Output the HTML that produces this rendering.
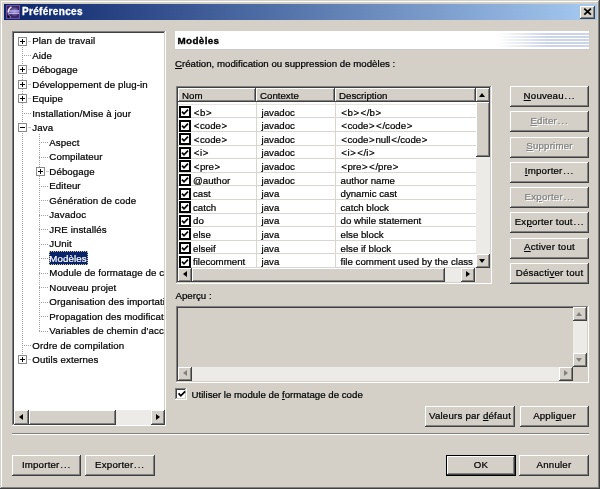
<!DOCTYPE html><html><head><meta charset="utf-8"><style>
html,body{margin:0;padding:0;width:600px;height:489px;overflow:hidden;background:#d4d0c8}
body{position:relative;font-family:"Liberation Sans",sans-serif;font-size:9.7px}
.t{position:absolute;white-space:nowrap;line-height:1.15;color:#000;-webkit-text-stroke:0.22px currentColor}
.c{text-align:center}
u{text-decoration:underline;text-underline-offset:1px}
.b{margin:0 0.65px}
</style></head><body><div id="w" style="position:absolute;left:0;top:0;width:600px;height:489px;will-change:transform">
<div style="position:absolute;left:0px;top:0px;width:600px;height:489px;background:#404040"></div>
<div style="position:absolute;left:0px;top:0px;width:599px;height:488px;background:#d4d0c8"></div>
<div style="position:absolute;left:1px;top:1px;width:598px;height:487px;background:#808080"></div>
<div style="position:absolute;left:1px;top:1px;width:597px;height:486px;background:#ffffff"></div>
<div style="position:absolute;left:2px;top:2px;width:596px;height:485px;background:#d4d0c8"></div>
<div style="position:absolute;left:4px;top:4px;width:593px;height:16px;background:linear-gradient(to right,#0a246a,#a6caf0)"></div>
<svg style="position:absolute;left:6px;top:5px" width="14" height="14" viewBox="0 0 14 14"><defs><radialGradient id="sg" cx="0.55" cy="0.45" r="0.6"><stop offset="0" stop-color="#9890c0"/><stop offset="0.6" stop-color="#5a4a8a"/><stop offset="1" stop-color="#2a1a50"/></radialGradient></defs><rect x="0.5" y="0.5" width="13" height="13" fill="#3a2468" stroke="#7050a0" stroke-width="1"/><circle cx="8" cy="7" r="5" fill="url(#sg)"/><rect x="2" y="5.3" width="11" height="1.4" fill="#b8b0f0"/><rect x="2" y="7.6" width="11" height="1.4" fill="#b8b0f0"/><path d="M5.5 1.8 Q2 4 2.2 7.5" stroke="#f0e8ff" stroke-width="1.5" fill="none"/><path d="M2.2 8 Q2.6 11 5 12.5" stroke="#9080c0" stroke-width="1.2" fill="none"/><rect x="1.5" y="10.5" width="2" height="2" fill="#000"/></svg>
<div class="t" style="left:22px;top:6.3px;font-size:10px;font-weight:bold;color:#fff;letter-spacing:0.32px;-webkit-text-stroke:0.3px #fff">Préférences</div>
<div style="position:absolute;left:580px;top:6px;width:15px;height:13px;background:#404040"></div>
<div style="position:absolute;left:580px;top:6px;width:14px;height:12px;background:#ffffff"></div>
<div style="position:absolute;left:581px;top:7px;width:13px;height:11px;background:#808080"></div>
<div style="position:absolute;left:581px;top:7px;width:12px;height:10px;background:#d4d0c8"></div>
<svg style="position:absolute;left:580px;top:6px" width="15" height="13" viewBox="0 0 15 13"><path d="M4.3 2.6 L10.9 8.6 M10.9 2.6 L4.3 8.6" stroke="#000" stroke-width="1.8"/></svg>
<div style="position:absolute;left:12px;top:31px;width:154px;height:395px;background:#ffffff"></div>
<div style="position:absolute;left:12px;top:31px;width:153px;height:394px;background:#808080"></div>
<div style="position:absolute;left:13px;top:32px;width:152px;height:393px;background:#d4d0c8"></div>
<div style="position:absolute;left:13px;top:32px;width:151px;height:392px;background:#404040"></div>
<div style="position:absolute;left:14px;top:33px;width:150px;height:391px;background:#fff"></div>
<div style="position:absolute;left:14px;top:33px;width:150px;height:377px;overflow:hidden">
<div style="position:absolute;left:8px;top:8px;width:1px;height:318.78000000000003px;background-image:linear-gradient(#a0a0a0 50%,transparent 50%);background-size:1px 2px"></div>
<div style="position:absolute;left:25px;top:100.94px;width:1px;height:196.86px;background-image:linear-gradient(#a0a0a0 50%,transparent 50%);background-size:1px 2px"></div>
<div style="position:absolute;left:4px;top:3.5px;width:9px;height:9px;background:#fff;border:1px solid #8a8a8a;box-sizing:border-box"></div>
<div style="position:absolute;left:6px;top:7.5px;width:5px;height:1px;background:#000"></div>
<div style="position:absolute;left:8px;top:5.5px;width:1px;height:5px;background:#000"></div>
<div style="position:absolute;left:13.5px;top:7.5px;width:3px;height:1px;background:#c8c8c8"></div>
<div class="t" style="left:18.299999999999997px;top:2.22px;letter-spacing:0.1px">Plan de travail</div>
<div style="position:absolute;left:8px;top:22.490000000000002px;width:8.999999999999996px;height:1px;background-image:linear-gradient(to right,#a0a0a0 50%,transparent 50%);background-size:2px 1px"></div>
<div class="t" style="left:18.299999999999997px;top:16.71px;letter-spacing:0.1px">Aide</div>
<div style="position:absolute;left:4px;top:32.480000000000004px;width:9px;height:9px;background:#fff;border:1px solid #8a8a8a;box-sizing:border-box"></div>
<div style="position:absolute;left:6px;top:36.480000000000004px;width:5px;height:1px;background:#000"></div>
<div style="position:absolute;left:8px;top:34.480000000000004px;width:1px;height:5px;background:#000"></div>
<div style="position:absolute;left:13.5px;top:36.480000000000004px;width:3px;height:1px;background:#c8c8c8"></div>
<div class="t" style="left:18.299999999999997px;top:31.20px;letter-spacing:0.1px">Débogage</div>
<div style="position:absolute;left:4px;top:46.97px;width:9px;height:9px;background:#fff;border:1px solid #8a8a8a;box-sizing:border-box"></div>
<div style="position:absolute;left:6px;top:50.97px;width:5px;height:1px;background:#000"></div>
<div style="position:absolute;left:8px;top:48.97px;width:1px;height:5px;background:#000"></div>
<div style="position:absolute;left:13.5px;top:50.97px;width:3px;height:1px;background:#c8c8c8"></div>
<div class="t" style="left:18.299999999999997px;top:45.69px;letter-spacing:0.1px">Développement de plug-in</div>
<div style="position:absolute;left:4px;top:61.46000000000001px;width:9px;height:9px;background:#fff;border:1px solid #8a8a8a;box-sizing:border-box"></div>
<div style="position:absolute;left:6px;top:65.46000000000001px;width:5px;height:1px;background:#000"></div>
<div style="position:absolute;left:8px;top:63.46000000000001px;width:1px;height:5px;background:#000"></div>
<div style="position:absolute;left:13.5px;top:65.46000000000001px;width:3px;height:1px;background:#c8c8c8"></div>
<div class="t" style="left:18.299999999999997px;top:60.18px;letter-spacing:0.1px">Equipe</div>
<div style="position:absolute;left:8px;top:80.45px;width:8.999999999999996px;height:1px;background-image:linear-gradient(to right,#a0a0a0 50%,transparent 50%);background-size:2px 1px"></div>
<div class="t" style="left:18.299999999999997px;top:74.67px;letter-spacing:0.1px">Installation/Mise à jour</div>
<div style="position:absolute;left:4px;top:90.44px;width:9px;height:9px;background:#fff;border:1px solid #8a8a8a;box-sizing:border-box"></div>
<div style="position:absolute;left:6px;top:94.44px;width:5px;height:1px;background:#000"></div>
<div style="position:absolute;left:13.5px;top:94.44px;width:3px;height:1px;background:#c8c8c8"></div>
<div class="t" style="left:18.299999999999997px;top:89.16px;letter-spacing:0.1px">Java</div>
<div style="position:absolute;left:25px;top:109.43px;width:8.999999999999996px;height:1px;background-image:linear-gradient(to right,#a0a0a0 50%,transparent 50%);background-size:2px 1px"></div>
<div class="t" style="left:35.3px;top:103.65px;letter-spacing:0.1px">Aspect</div>
<div style="position:absolute;left:25px;top:123.92000000000002px;width:8.999999999999996px;height:1px;background-image:linear-gradient(to right,#a0a0a0 50%,transparent 50%);background-size:2px 1px"></div>
<div class="t" style="left:35.3px;top:118.14px;letter-spacing:0.1px">Compilateur</div>
<div style="position:absolute;left:22px;top:133.91px;width:9px;height:9px;background:#fff;border:1px solid #8a8a8a;box-sizing:border-box"></div>
<div style="position:absolute;left:24px;top:137.91px;width:5px;height:1px;background:#000"></div>
<div style="position:absolute;left:26px;top:135.91px;width:1px;height:5px;background:#000"></div>
<div style="position:absolute;left:31.5px;top:137.91px;width:3px;height:1px;background:#c8c8c8"></div>
<div class="t" style="left:35.3px;top:132.63px;letter-spacing:0.1px">Débogage</div>
<div style="position:absolute;left:25px;top:152.9px;width:8.999999999999996px;height:1px;background-image:linear-gradient(to right,#a0a0a0 50%,transparent 50%);background-size:2px 1px"></div>
<div class="t" style="left:35.3px;top:147.12px;letter-spacing:0.1px">Editeur</div>
<div style="position:absolute;left:25px;top:167.39000000000001px;width:8.999999999999996px;height:1px;background-image:linear-gradient(to right,#a0a0a0 50%,transparent 50%);background-size:2px 1px"></div>
<div class="t" style="left:35.3px;top:161.61px;letter-spacing:0.1px">Génération de code</div>
<div style="position:absolute;left:25px;top:181.88px;width:8.999999999999996px;height:1px;background-image:linear-gradient(to right,#a0a0a0 50%,transparent 50%);background-size:2px 1px"></div>
<div class="t" style="left:35.3px;top:176.10px;letter-spacing:0.1px">Javadoc</div>
<div style="position:absolute;left:25px;top:196.37px;width:8.999999999999996px;height:1px;background-image:linear-gradient(to right,#a0a0a0 50%,transparent 50%);background-size:2px 1px"></div>
<div class="t" style="left:35.3px;top:190.59px;letter-spacing:0.1px">JRE installés</div>
<div style="position:absolute;left:25px;top:210.86px;width:8.999999999999996px;height:1px;background-image:linear-gradient(to right,#a0a0a0 50%,transparent 50%);background-size:2px 1px"></div>
<div class="t" style="left:35.3px;top:205.08px;letter-spacing:0.1px">JUnit</div>
<div style="position:absolute;left:25px;top:225.35000000000002px;width:8.999999999999996px;height:1px;background-image:linear-gradient(to right,#a0a0a0 50%,transparent 50%);background-size:2px 1px"></div>
<div style="position:absolute;left:34.5px;top:218.35000000000002px;width:39.5px;height:14px;background:#0a246a;outline:1px dotted #d8c890;outline-offset:-1px"></div>
<div class="t" style="left:35.3px;top:219.57px;color:#fff;letter-spacing:0.1px">Modèles</div>
<div style="position:absolute;left:25px;top:239.84000000000003px;width:8.999999999999996px;height:1px;background-image:linear-gradient(to right,#a0a0a0 50%,transparent 50%);background-size:2px 1px"></div>
<div class="t" style="left:35.3px;top:234.06px;letter-spacing:0.1px">Module de formatage de code</div>
<div style="position:absolute;left:25px;top:254.33000000000004px;width:8.999999999999996px;height:1px;background-image:linear-gradient(to right,#a0a0a0 50%,transparent 50%);background-size:2px 1px"></div>
<div class="t" style="left:35.3px;top:248.55px;letter-spacing:0.1px">Nouveau projet</div>
<div style="position:absolute;left:25px;top:268.82px;width:8.999999999999996px;height:1px;background-image:linear-gradient(to right,#a0a0a0 50%,transparent 50%);background-size:2px 1px"></div>
<div class="t" style="left:35.3px;top:263.04px;letter-spacing:0.1px">Organisation des importations</div>
<div style="position:absolute;left:25px;top:283.31px;width:8.999999999999996px;height:1px;background-image:linear-gradient(to right,#a0a0a0 50%,transparent 50%);background-size:2px 1px"></div>
<div class="t" style="left:35.3px;top:277.53px;letter-spacing:0.1px">Propagation des modifications</div>
<div style="position:absolute;left:25px;top:297.8px;width:8.999999999999996px;height:1px;background-image:linear-gradient(to right,#a0a0a0 50%,transparent 50%);background-size:2px 1px"></div>
<div class="t" style="left:35.3px;top:292.02px;letter-spacing:0.1px">Variables de chemin d'accès</div>
<div style="position:absolute;left:8px;top:312.29px;width:8.999999999999996px;height:1px;background-image:linear-gradient(to right,#a0a0a0 50%,transparent 50%);background-size:2px 1px"></div>
<div class="t" style="left:18.299999999999997px;top:306.51px;letter-spacing:0.1px">Ordre de compilation</div>
<div style="position:absolute;left:4px;top:322.28000000000003px;width:9px;height:9px;background:#fff;border:1px solid #8a8a8a;box-sizing:border-box"></div>
<div style="position:absolute;left:6px;top:326.28000000000003px;width:5px;height:1px;background:#000"></div>
<div style="position:absolute;left:8px;top:324.28000000000003px;width:1px;height:5px;background:#000"></div>
<div style="position:absolute;left:13.5px;top:326.28000000000003px;width:3px;height:1px;background:#c8c8c8"></div>
<div class="t" style="left:18.299999999999997px;top:321.00px;letter-spacing:0.1px">Outils externes</div>
</div>
<div style="position:absolute;left:14px;top:410px;width:151px;height:15px;background:#ecebe7"></div>
<div style="position:absolute;left:14px;top:410px;width:15px;height:15px;background:#404040"></div>
<div style="position:absolute;left:14px;top:410px;width:14px;height:14px;background:#ffffff"></div>
<div style="position:absolute;left:15px;top:411px;width:13px;height:13px;background:#808080"></div>
<div style="position:absolute;left:15px;top:411px;width:12px;height:12px;background:#d4d0c8"></div>
<div style="position:absolute;left:19.0px;top:413.5px;width:0;height:0;border-top:3.5px solid transparent;border-bottom:3.5px solid transparent;border-right:4px solid #000"></div>
<div style="position:absolute;left:29px;top:410px;width:87px;height:15px;background:#404040"></div>
<div style="position:absolute;left:29px;top:410px;width:86px;height:14px;background:#ffffff"></div>
<div style="position:absolute;left:30px;top:411px;width:85px;height:13px;background:#808080"></div>
<div style="position:absolute;left:30px;top:411px;width:84px;height:12px;background:#d4d0c8"></div>
<div style="position:absolute;left:151px;top:410px;width:14px;height:15px;background:#404040"></div>
<div style="position:absolute;left:151px;top:410px;width:13px;height:14px;background:#ffffff"></div>
<div style="position:absolute;left:152px;top:411px;width:12px;height:13px;background:#808080"></div>
<div style="position:absolute;left:152px;top:411px;width:11px;height:12px;background:#d4d0c8"></div>
<div style="position:absolute;left:155.5px;top:413.5px;width:0;height:0;border-top:3.5px solid transparent;border-bottom:3.5px solid transparent;border-left:4px solid #000"></div>
<div style="position:absolute;left:175px;top:31px;width:414px;height:18px;background:#fff"></div>
<div style="position:absolute;left:175px;top:49px;width:414px;height:1px;background:#c8c8c8"></div>
<div style="position:absolute;left:496px;top:33px;width:93px;height:14px;background:repeating-linear-gradient(to bottom,#ccd5e8 0,#ccd5e8 1.6px,transparent 1.6px,transparent 3px);-webkit-mask-image:linear-gradient(to right,transparent,#000 55%);mask-image:linear-gradient(to right,transparent,#000 55%)"></div>
<div class="t" style="left:177.5px;top:34.7px;font-size:9.9px;font-weight:bold;letter-spacing:0.35px;-webkit-text-stroke:0.35px #000">Modèles</div>
<div class="t" style="left:175px;top:58.42px;font-size:9.7px;color:#000;"><u>C</u>réation, modification ou suppression de modèles :</div>
<div style="position:absolute;left:176px;top:86px;width:316px;height:198px;background:#ffffff"></div>
<div style="position:absolute;left:176px;top:86px;width:315px;height:197px;background:#808080"></div>
<div style="position:absolute;left:177px;top:87px;width:314px;height:196px;background:#d4d0c8"></div>
<div style="position:absolute;left:177px;top:87px;width:313px;height:195px;background:#404040"></div>
<div style="position:absolute;left:178px;top:88px;width:312px;height:194px;background:#fff"></div>
<div style="position:absolute;left:178px;top:88px;width:78px;height:14px;background:#404040"></div>
<div style="position:absolute;left:178px;top:88px;width:77px;height:13px;background:#ffffff"></div>
<div style="position:absolute;left:179px;top:89px;width:76px;height:12px;background:#808080"></div>
<div style="position:absolute;left:179px;top:89px;width:75px;height:11px;background:#d4d0c8"></div>
<div class="t" style="left:182px;top:89.6px">Nom</div>
<div style="position:absolute;left:256px;top:88px;width:79px;height:14px;background:#404040"></div>
<div style="position:absolute;left:256px;top:88px;width:78px;height:13px;background:#ffffff"></div>
<div style="position:absolute;left:257px;top:89px;width:77px;height:12px;background:#808080"></div>
<div style="position:absolute;left:257px;top:89px;width:76px;height:11px;background:#d4d0c8"></div>
<div class="t" style="left:260px;top:89.6px">Contexte</div>
<div style="position:absolute;left:335px;top:88px;width:141px;height:14px;background:#404040"></div>
<div style="position:absolute;left:335px;top:88px;width:140px;height:13px;background:#ffffff"></div>
<div style="position:absolute;left:336px;top:89px;width:139px;height:12px;background:#808080"></div>
<div style="position:absolute;left:336px;top:89px;width:138px;height:11px;background:#d4d0c8"></div>
<div class="t" style="left:339px;top:89.6px">Description</div>
<div style="position:absolute;left:178px;top:102px;width:298px;height:166px;overflow:hidden;background:#fff">
<div style="position:absolute;left:0;top:15.30px;width:298px;height:1px;background:#d8d6d0"></div>
<div style="position:absolute;left:1px;top:3.90px;width:12px;height:12px;box-sizing:border-box;border:2px solid #000;background:#fff"></div>
<svg style="position:absolute;left:1px;top:3.90px" width="12" height="12" viewBox="0 0 12 12"><path d="M3 5.6 L5 7.8 L9 3.6" stroke="#000" stroke-width="1.7" fill="none"/></svg>
<div class="t" style="left:15px;top:4.52px"><span class="b">&lt;</span>b<span class="b">&gt;</span></div>
<div class="t" style="left:83.5px;top:4.52px">javadoc</div>
<div class="t" style="left:162.5px;top:4.52px"><span class="b">&lt;</span>b<span class="b">&gt;</span><span class="b">&lt;</span>/b<span class="b">&gt;</span></div>
<div style="position:absolute;left:0;top:28.90px;width:298px;height:1px;background:#d8d6d0"></div>
<div style="position:absolute;left:1px;top:17.50px;width:12px;height:12px;box-sizing:border-box;border:2px solid #000;background:#fff"></div>
<svg style="position:absolute;left:1px;top:17.50px" width="12" height="12" viewBox="0 0 12 12"><path d="M3 5.6 L5 7.8 L9 3.6" stroke="#000" stroke-width="1.7" fill="none"/></svg>
<div class="t" style="left:15px;top:18.12px"><span class="b">&lt;</span>code<span class="b">&gt;</span></div>
<div class="t" style="left:83.5px;top:18.12px">javadoc</div>
<div class="t" style="left:162.5px;top:18.12px"><span class="b">&lt;</span>code<span class="b">&gt;</span><span class="b">&lt;</span>/code<span class="b">&gt;</span></div>
<div style="position:absolute;left:0;top:42.50px;width:298px;height:1px;background:#d8d6d0"></div>
<div style="position:absolute;left:1px;top:31.10px;width:12px;height:12px;box-sizing:border-box;border:2px solid #000;background:#fff"></div>
<svg style="position:absolute;left:1px;top:31.10px" width="12" height="12" viewBox="0 0 12 12"><path d="M3 5.6 L5 7.8 L9 3.6" stroke="#000" stroke-width="1.7" fill="none"/></svg>
<div class="t" style="left:15px;top:31.72px"><span class="b">&lt;</span>code<span class="b">&gt;</span></div>
<div class="t" style="left:83.5px;top:31.72px">javadoc</div>
<div class="t" style="left:162.5px;top:31.72px"><span class="b">&lt;</span>code<span class="b">&gt;</span>null<span class="b">&lt;</span>/code<span class="b">&gt;</span></div>
<div style="position:absolute;left:0;top:56.10px;width:298px;height:1px;background:#d8d6d0"></div>
<div style="position:absolute;left:1px;top:44.70px;width:12px;height:12px;box-sizing:border-box;border:2px solid #000;background:#fff"></div>
<svg style="position:absolute;left:1px;top:44.70px" width="12" height="12" viewBox="0 0 12 12"><path d="M3 5.6 L5 7.8 L9 3.6" stroke="#000" stroke-width="1.7" fill="none"/></svg>
<div class="t" style="left:15px;top:45.32px"><span class="b">&lt;</span>i<span class="b">&gt;</span></div>
<div class="t" style="left:83.5px;top:45.32px">javadoc</div>
<div class="t" style="left:162.5px;top:45.32px"><span class="b">&lt;</span>i<span class="b">&gt;</span><span class="b">&lt;</span>/i<span class="b">&gt;</span></div>
<div style="position:absolute;left:0;top:69.70px;width:298px;height:1px;background:#d8d6d0"></div>
<div style="position:absolute;left:1px;top:58.30px;width:12px;height:12px;box-sizing:border-box;border:2px solid #000;background:#fff"></div>
<svg style="position:absolute;left:1px;top:58.30px" width="12" height="12" viewBox="0 0 12 12"><path d="M3 5.6 L5 7.8 L9 3.6" stroke="#000" stroke-width="1.7" fill="none"/></svg>
<div class="t" style="left:15px;top:58.92px"><span class="b">&lt;</span>pre<span class="b">&gt;</span></div>
<div class="t" style="left:83.5px;top:58.92px">javadoc</div>
<div class="t" style="left:162.5px;top:58.92px"><span class="b">&lt;</span>pre<span class="b">&gt;</span><span class="b">&lt;</span>/pre<span class="b">&gt;</span></div>
<div style="position:absolute;left:0;top:83.30px;width:298px;height:1px;background:#d8d6d0"></div>
<div style="position:absolute;left:1px;top:71.90px;width:12px;height:12px;box-sizing:border-box;border:2px solid #000;background:#fff"></div>
<svg style="position:absolute;left:1px;top:71.90px" width="12" height="12" viewBox="0 0 12 12"><path d="M3 5.6 L5 7.8 L9 3.6" stroke="#000" stroke-width="1.7" fill="none"/></svg>
<div class="t" style="left:15px;top:72.52px">@author</div>
<div class="t" style="left:83.5px;top:72.52px">javadoc</div>
<div class="t" style="left:162.5px;top:72.52px">author name</div>
<div style="position:absolute;left:0;top:96.90px;width:298px;height:1px;background:#d8d6d0"></div>
<div style="position:absolute;left:1px;top:85.50px;width:12px;height:12px;box-sizing:border-box;border:2px solid #000;background:#fff"></div>
<svg style="position:absolute;left:1px;top:85.50px" width="12" height="12" viewBox="0 0 12 12"><path d="M3 5.6 L5 7.8 L9 3.6" stroke="#000" stroke-width="1.7" fill="none"/></svg>
<div class="t" style="left:15px;top:86.12px">cast</div>
<div class="t" style="left:83.5px;top:86.12px">java</div>
<div class="t" style="left:162.5px;top:86.12px">dynamic cast</div>
<div style="position:absolute;left:0;top:110.50px;width:298px;height:1px;background:#d8d6d0"></div>
<div style="position:absolute;left:1px;top:99.10px;width:12px;height:12px;box-sizing:border-box;border:2px solid #000;background:#fff"></div>
<svg style="position:absolute;left:1px;top:99.10px" width="12" height="12" viewBox="0 0 12 12"><path d="M3 5.6 L5 7.8 L9 3.6" stroke="#000" stroke-width="1.7" fill="none"/></svg>
<div class="t" style="left:15px;top:99.72px">catch</div>
<div class="t" style="left:83.5px;top:99.72px">java</div>
<div class="t" style="left:162.5px;top:99.72px">catch block</div>
<div style="position:absolute;left:0;top:124.10px;width:298px;height:1px;background:#d8d6d0"></div>
<div style="position:absolute;left:1px;top:112.70px;width:12px;height:12px;box-sizing:border-box;border:2px solid #000;background:#fff"></div>
<svg style="position:absolute;left:1px;top:112.70px" width="12" height="12" viewBox="0 0 12 12"><path d="M3 5.6 L5 7.8 L9 3.6" stroke="#000" stroke-width="1.7" fill="none"/></svg>
<div class="t" style="left:15px;top:113.32px">do</div>
<div class="t" style="left:83.5px;top:113.32px">java</div>
<div class="t" style="left:162.5px;top:113.32px">do while statement</div>
<div style="position:absolute;left:0;top:137.70px;width:298px;height:1px;background:#d8d6d0"></div>
<div style="position:absolute;left:1px;top:126.30px;width:12px;height:12px;box-sizing:border-box;border:2px solid #000;background:#fff"></div>
<svg style="position:absolute;left:1px;top:126.30px" width="12" height="12" viewBox="0 0 12 12"><path d="M3 5.6 L5 7.8 L9 3.6" stroke="#000" stroke-width="1.7" fill="none"/></svg>
<div class="t" style="left:15px;top:126.92px">else</div>
<div class="t" style="left:83.5px;top:126.92px">java</div>
<div class="t" style="left:162.5px;top:126.92px">else block</div>
<div style="position:absolute;left:0;top:151.30px;width:298px;height:1px;background:#d8d6d0"></div>
<div style="position:absolute;left:1px;top:139.90px;width:12px;height:12px;box-sizing:border-box;border:2px solid #000;background:#fff"></div>
<svg style="position:absolute;left:1px;top:139.90px" width="12" height="12" viewBox="0 0 12 12"><path d="M3 5.6 L5 7.8 L9 3.6" stroke="#000" stroke-width="1.7" fill="none"/></svg>
<div class="t" style="left:15px;top:140.52px">elseif</div>
<div class="t" style="left:83.5px;top:140.52px">java</div>
<div class="t" style="left:162.5px;top:140.52px">else if block</div>
<div style="position:absolute;left:0;top:164.90px;width:298px;height:1px;background:#d8d6d0"></div>
<div style="position:absolute;left:1px;top:153.50px;width:12px;height:12px;box-sizing:border-box;border:2px solid #000;background:#fff"></div>
<svg style="position:absolute;left:1px;top:153.50px" width="12" height="12" viewBox="0 0 12 12"><path d="M3 5.6 L5 7.8 L9 3.6" stroke="#000" stroke-width="1.7" fill="none"/></svg>
<div class="t" style="left:15px;top:154.12px">filecomment</div>
<div class="t" style="left:83.5px;top:154.12px">java</div>
<div class="t" style="left:162.5px;top:154.12px">file comment used by the class</div>
<div style="position:absolute;left:0;top:1.5px;width:298px;height:1px;background:#e8e6e0"></div>
<div style="position:absolute;left:78px;top:0;width:1px;height:166px;background:#d8d6d0"></div>
<div style="position:absolute;left:157px;top:0;width:1px;height:166px;background:#d8d6d0"></div>
</div>
<div style="position:absolute;left:476px;top:88px;width:14px;height:180px;background:#ecebe7"></div>
<div style="position:absolute;left:476px;top:88px;width:14px;height:14px;background:#404040"></div>
<div style="position:absolute;left:476px;top:88px;width:13px;height:13px;background:#ffffff"></div>
<div style="position:absolute;left:477px;top:89px;width:12px;height:12px;background:#808080"></div>
<div style="position:absolute;left:477px;top:89px;width:11px;height:11px;background:#d4d0c8"></div>
<div style="position:absolute;left:479.0px;top:92.5px;width:0;height:0;border-left:3.5px solid transparent;border-right:3.5px solid transparent;border-bottom:4px solid #000"></div>
<div style="position:absolute;left:476px;top:102px;width:14px;height:55px;background:#404040"></div>
<div style="position:absolute;left:476px;top:102px;width:13px;height:54px;background:#ffffff"></div>
<div style="position:absolute;left:477px;top:103px;width:12px;height:53px;background:#808080"></div>
<div style="position:absolute;left:477px;top:103px;width:11px;height:52px;background:#d4d0c8"></div>
<div style="position:absolute;left:476px;top:254px;width:14px;height:14px;background:#404040"></div>
<div style="position:absolute;left:476px;top:254px;width:13px;height:13px;background:#ffffff"></div>
<div style="position:absolute;left:477px;top:255px;width:12px;height:12px;background:#808080"></div>
<div style="position:absolute;left:477px;top:255px;width:11px;height:11px;background:#d4d0c8"></div>
<div style="position:absolute;left:479.0px;top:258.5px;width:0;height:0;border-left:3.5px solid transparent;border-right:3.5px solid transparent;border-top:4px solid #000"></div>
<div style="position:absolute;left:178px;top:268px;width:298px;height:14px;background:#ecebe7"></div>
<div style="position:absolute;left:178px;top:268px;width:14px;height:14px;background:#404040"></div>
<div style="position:absolute;left:178px;top:268px;width:13px;height:13px;background:#ffffff"></div>
<div style="position:absolute;left:179px;top:269px;width:12px;height:12px;background:#808080"></div>
<div style="position:absolute;left:179px;top:269px;width:11px;height:11px;background:#d4d0c8"></div>
<div style="position:absolute;left:182.5px;top:271.0px;width:0;height:0;border-top:3.5px solid transparent;border-bottom:3.5px solid transparent;border-right:4px solid #000"></div>
<div style="position:absolute;left:192px;top:268px;width:253px;height:14px;background:#404040"></div>
<div style="position:absolute;left:192px;top:268px;width:252px;height:13px;background:#ffffff"></div>
<div style="position:absolute;left:193px;top:269px;width:251px;height:12px;background:#808080"></div>
<div style="position:absolute;left:193px;top:269px;width:250px;height:11px;background:#d4d0c8"></div>
<div style="position:absolute;left:461px;top:268px;width:14px;height:14px;background:#404040"></div>
<div style="position:absolute;left:461px;top:268px;width:13px;height:13px;background:#ffffff"></div>
<div style="position:absolute;left:462px;top:269px;width:12px;height:12px;background:#808080"></div>
<div style="position:absolute;left:462px;top:269px;width:11px;height:11px;background:#d4d0c8"></div>
<div style="position:absolute;left:465.5px;top:271.0px;width:0;height:0;border-top:3.5px solid transparent;border-bottom:3.5px solid transparent;border-left:4px solid #000"></div>
<div style="position:absolute;left:476px;top:268px;width:14px;height:14px;background:#d4d0c8"></div>
<div style="position:absolute;left:510px;top:86px;width:79px;height:21px;background:#404040"></div>
<div style="position:absolute;left:510px;top:86px;width:78px;height:20px;background:#ffffff"></div>
<div style="position:absolute;left:511px;top:87px;width:77px;height:19px;background:#808080"></div>
<div style="position:absolute;left:511px;top:87px;width:76px;height:18px;background:#d4d0c8"></div>
<div class="t c" style="left:510px;top:89.5px;width:79px;letter-spacing:0.2px"><u>N</u>ouveau<span style="letter-spacing:0.9px;margin-left:0.8px">...</span></div>
<div style="position:absolute;left:510px;top:111px;width:79px;height:21px;background:#404040"></div>
<div style="position:absolute;left:510px;top:111px;width:78px;height:20px;background:#ffffff"></div>
<div style="position:absolute;left:511px;top:112px;width:77px;height:19px;background:#808080"></div>
<div style="position:absolute;left:511px;top:112px;width:76px;height:18px;background:#d4d0c8"></div>
<div class="t c" style="left:511px;top:115.8px;width:79px;color:#fff;letter-spacing:0.2px"><u>E</u>diter<span style="letter-spacing:0.9px;margin-left:0.8px">...</span></div>
<div class="t c" style="left:510px;top:114.8px;width:79px;color:#808080;letter-spacing:0.2px"><u>E</u>diter<span style="letter-spacing:0.9px;margin-left:0.8px">...</span></div>
<div style="position:absolute;left:510px;top:137px;width:79px;height:21px;background:#404040"></div>
<div style="position:absolute;left:510px;top:137px;width:78px;height:20px;background:#ffffff"></div>
<div style="position:absolute;left:511px;top:138px;width:77px;height:19px;background:#808080"></div>
<div style="position:absolute;left:511px;top:138px;width:76px;height:18px;background:#d4d0c8"></div>
<div class="t c" style="left:511px;top:141.1px;width:79px;color:#fff;letter-spacing:0.2px"><u>S</u>upprimer</div>
<div class="t c" style="left:510px;top:140.1px;width:79px;color:#808080;letter-spacing:0.2px"><u>S</u>upprimer</div>
<div style="position:absolute;left:510px;top:162px;width:79px;height:21px;background:#404040"></div>
<div style="position:absolute;left:510px;top:162px;width:78px;height:20px;background:#ffffff"></div>
<div style="position:absolute;left:511px;top:163px;width:77px;height:19px;background:#808080"></div>
<div style="position:absolute;left:511px;top:163px;width:76px;height:18px;background:#d4d0c8"></div>
<div class="t c" style="left:510px;top:165.4px;width:79px;letter-spacing:0.2px"><u>I</u>mporter<span style="letter-spacing:0.9px;margin-left:0.8px">...</span></div>
<div style="position:absolute;left:510px;top:187px;width:79px;height:21px;background:#404040"></div>
<div style="position:absolute;left:510px;top:187px;width:78px;height:20px;background:#ffffff"></div>
<div style="position:absolute;left:511px;top:188px;width:77px;height:19px;background:#808080"></div>
<div style="position:absolute;left:511px;top:188px;width:76px;height:18px;background:#d4d0c8"></div>
<div class="t c" style="left:511px;top:191.7px;width:79px;color:#fff;letter-spacing:0.2px">Ex<u>p</u>orter<span style="letter-spacing:0.9px;margin-left:0.8px">...</span></div>
<div class="t c" style="left:510px;top:190.7px;width:79px;color:#808080;letter-spacing:0.2px">Ex<u>p</u>orter<span style="letter-spacing:0.9px;margin-left:0.8px">...</span></div>
<div style="position:absolute;left:510px;top:212px;width:79px;height:21px;background:#404040"></div>
<div style="position:absolute;left:510px;top:212px;width:78px;height:20px;background:#ffffff"></div>
<div style="position:absolute;left:511px;top:213px;width:77px;height:19px;background:#808080"></div>
<div style="position:absolute;left:511px;top:213px;width:76px;height:18px;background:#d4d0c8"></div>
<div class="t c" style="left:510px;top:216.0px;width:79px;letter-spacing:0.2px">Ex<u>p</u>orter tout<span style="letter-spacing:0.9px;margin-left:0.8px">...</span></div>
<div style="position:absolute;left:510px;top:238px;width:79px;height:21px;background:#404040"></div>
<div style="position:absolute;left:510px;top:238px;width:78px;height:20px;background:#ffffff"></div>
<div style="position:absolute;left:511px;top:239px;width:77px;height:19px;background:#808080"></div>
<div style="position:absolute;left:511px;top:239px;width:76px;height:18px;background:#d4d0c8"></div>
<div class="t c" style="left:510px;top:241.3px;width:79px;letter-spacing:0.2px"><u>A</u>ctiver tout</div>
<div style="position:absolute;left:510px;top:263px;width:79px;height:21px;background:#404040"></div>
<div style="position:absolute;left:510px;top:263px;width:78px;height:20px;background:#ffffff"></div>
<div style="position:absolute;left:511px;top:264px;width:77px;height:19px;background:#808080"></div>
<div style="position:absolute;left:511px;top:264px;width:76px;height:18px;background:#d4d0c8"></div>
<div class="t c" style="left:510px;top:266.6px;width:79px;letter-spacing:0.2px">Désacti<u>v</u>er tout</div>
<div class="t" style="left:175.5px;top:289.72px;font-size:9.7px;color:#000;">Aperçu :</div>
<div style="position:absolute;left:176px;top:306px;width:413px;height:77px;background:#ffffff"></div>
<div style="position:absolute;left:176px;top:306px;width:412px;height:76px;background:#808080"></div>
<div style="position:absolute;left:177px;top:307px;width:411px;height:75px;background:#d4d0c8"></div>
<div style="position:absolute;left:177px;top:307px;width:410px;height:74px;background:#404040"></div>
<div style="position:absolute;left:178px;top:308px;width:409px;height:73px;background:#d4d0c8"></div>
<div style="position:absolute;left:573px;top:307px;width:14px;height:60px;background:#ecebe7"></div>
<div style="position:absolute;left:573px;top:307px;width:14px;height:14px;background:#404040"></div>
<div style="position:absolute;left:573px;top:307px;width:13px;height:13px;background:#ffffff"></div>
<div style="position:absolute;left:574px;top:308px;width:12px;height:12px;background:#808080"></div>
<div style="position:absolute;left:574px;top:308px;width:11px;height:11px;background:#d4d0c8"></div>
<div style="position:absolute;left:576.0px;top:311.5px;width:0;height:0;border-left:3.5px solid transparent;border-right:3.5px solid transparent;border-bottom:4px solid #808080"></div>
<div style="position:absolute;left:573px;top:353px;width:14px;height:14px;background:#404040"></div>
<div style="position:absolute;left:573px;top:353px;width:13px;height:13px;background:#ffffff"></div>
<div style="position:absolute;left:574px;top:354px;width:12px;height:12px;background:#808080"></div>
<div style="position:absolute;left:574px;top:354px;width:11px;height:11px;background:#d4d0c8"></div>
<div style="position:absolute;left:576.0px;top:357.5px;width:0;height:0;border-left:3.5px solid transparent;border-right:3.5px solid transparent;border-top:4px solid #808080"></div>
<div style="position:absolute;left:178px;top:367px;width:395px;height:14px;background:#ecebe7"></div>
<div style="position:absolute;left:178px;top:367px;width:14px;height:14px;background:#404040"></div>
<div style="position:absolute;left:178px;top:367px;width:13px;height:13px;background:#ffffff"></div>
<div style="position:absolute;left:179px;top:368px;width:12px;height:12px;background:#808080"></div>
<div style="position:absolute;left:179px;top:368px;width:11px;height:11px;background:#d4d0c8"></div>
<div style="position:absolute;left:182.5px;top:370.0px;width:0;height:0;border-top:3.5px solid transparent;border-bottom:3.5px solid transparent;border-right:4px solid #808080"></div>
<div style="position:absolute;left:559px;top:367px;width:14px;height:14px;background:#404040"></div>
<div style="position:absolute;left:559px;top:367px;width:13px;height:13px;background:#ffffff"></div>
<div style="position:absolute;left:560px;top:368px;width:12px;height:12px;background:#808080"></div>
<div style="position:absolute;left:560px;top:368px;width:11px;height:11px;background:#d4d0c8"></div>
<div style="position:absolute;left:563.5px;top:370.0px;width:0;height:0;border-top:3.5px solid transparent;border-bottom:3.5px solid transparent;border-left:4px solid #808080"></div>
<div style="position:absolute;left:573px;top:367px;width:14px;height:14px;background:#d4d0c8"></div>
<div style="position:absolute;left:175px;top:388px;width:12px;height:12px;background:#ffffff"></div>
<div style="position:absolute;left:175px;top:388px;width:11px;height:11px;background:#808080"></div>
<div style="position:absolute;left:176px;top:389px;width:10px;height:10px;background:#d4d0c8"></div>
<div style="position:absolute;left:176px;top:389px;width:9px;height:9px;background:#404040"></div>
<div style="position:absolute;left:177px;top:390px;width:8px;height:8px;background:#fff"></div>
<svg style="position:absolute;left:175.5px;top:388px" width="12" height="12" viewBox="0 0 12 12"><path d="M2.6 5.4 L4.8 7.8 L9.2 3.4" stroke="#000" stroke-width="1.8" fill="none"/></svg>
<div class="t" style="left:191.5px;top:389.22px;font-size:9.7px;color:#000;">Utiliser le module de <u>f</u>ormatage de code</div>
<div style="position:absolute;left:425px;top:406px;width:90px;height:21px;background:#404040"></div>
<div style="position:absolute;left:425px;top:406px;width:89px;height:20px;background:#ffffff"></div>
<div style="position:absolute;left:426px;top:407px;width:88px;height:19px;background:#808080"></div>
<div style="position:absolute;left:426px;top:407px;width:87px;height:18px;background:#d4d0c8"></div>
<div class="t c" style="left:425px;top:409.5px;width:90px;letter-spacing:0.2px">Valeurs par <u>d</u>éfaut</div>
<div style="position:absolute;left:520px;top:406px;width:69px;height:21px;background:#404040"></div>
<div style="position:absolute;left:520px;top:406px;width:68px;height:20px;background:#ffffff"></div>
<div style="position:absolute;left:521px;top:407px;width:67px;height:19px;background:#808080"></div>
<div style="position:absolute;left:521px;top:407px;width:66px;height:18px;background:#d4d0c8"></div>
<div class="t c" style="left:520px;top:409.5px;width:69px;letter-spacing:0.2px">Appli<u>q</u>uer</div>
<div style="position:absolute;left:12px;top:433px;width:577px;height:1px;background:#808080"></div>
<div style="position:absolute;left:12px;top:434px;width:577px;height:1px;background:#ffffff"></div>
<div style="position:absolute;left:12px;top:455px;width:69px;height:21px;background:#404040"></div>
<div style="position:absolute;left:12px;top:455px;width:68px;height:20px;background:#ffffff"></div>
<div style="position:absolute;left:13px;top:456px;width:67px;height:19px;background:#808080"></div>
<div style="position:absolute;left:13px;top:456px;width:66px;height:18px;background:#d4d0c8"></div>
<div class="t c" style="left:12px;top:458.5px;width:69px;letter-spacing:0.2px">Importer<span style="letter-spacing:0.9px;margin-left:0.8px">...</span></div>
<div style="position:absolute;left:85px;top:455px;width:70px;height:21px;background:#404040"></div>
<div style="position:absolute;left:85px;top:455px;width:69px;height:20px;background:#ffffff"></div>
<div style="position:absolute;left:86px;top:456px;width:68px;height:19px;background:#808080"></div>
<div style="position:absolute;left:86px;top:456px;width:67px;height:18px;background:#d4d0c8"></div>
<div class="t c" style="left:85px;top:458.5px;width:70px;letter-spacing:0.2px">Exporter<span style="letter-spacing:0.9px;margin-left:0.8px">...</span></div>
<div style="position:absolute;left:446px;top:455px;width:70px;height:21px;background:#000"></div>
<div style="position:absolute;left:447px;top:456px;width:68px;height:19px;background:#404040"></div>
<div style="position:absolute;left:447px;top:456px;width:67px;height:18px;background:#ffffff"></div>
<div style="position:absolute;left:448px;top:457px;width:66px;height:17px;background:#808080"></div>
<div style="position:absolute;left:448px;top:457px;width:65px;height:16px;background:#d4d0c8"></div>
<div class="t c" style="left:446px;top:458.5px;width:70px;letter-spacing:0.2px">OK</div>
<div style="position:absolute;left:519px;top:455px;width:70px;height:21px;background:#404040"></div>
<div style="position:absolute;left:519px;top:455px;width:69px;height:20px;background:#ffffff"></div>
<div style="position:absolute;left:520px;top:456px;width:68px;height:19px;background:#808080"></div>
<div style="position:absolute;left:520px;top:456px;width:67px;height:18px;background:#d4d0c8"></div>
<div class="t c" style="left:519px;top:458.5px;width:70px;letter-spacing:0.2px">Annuler</div>
</div></body></html>
